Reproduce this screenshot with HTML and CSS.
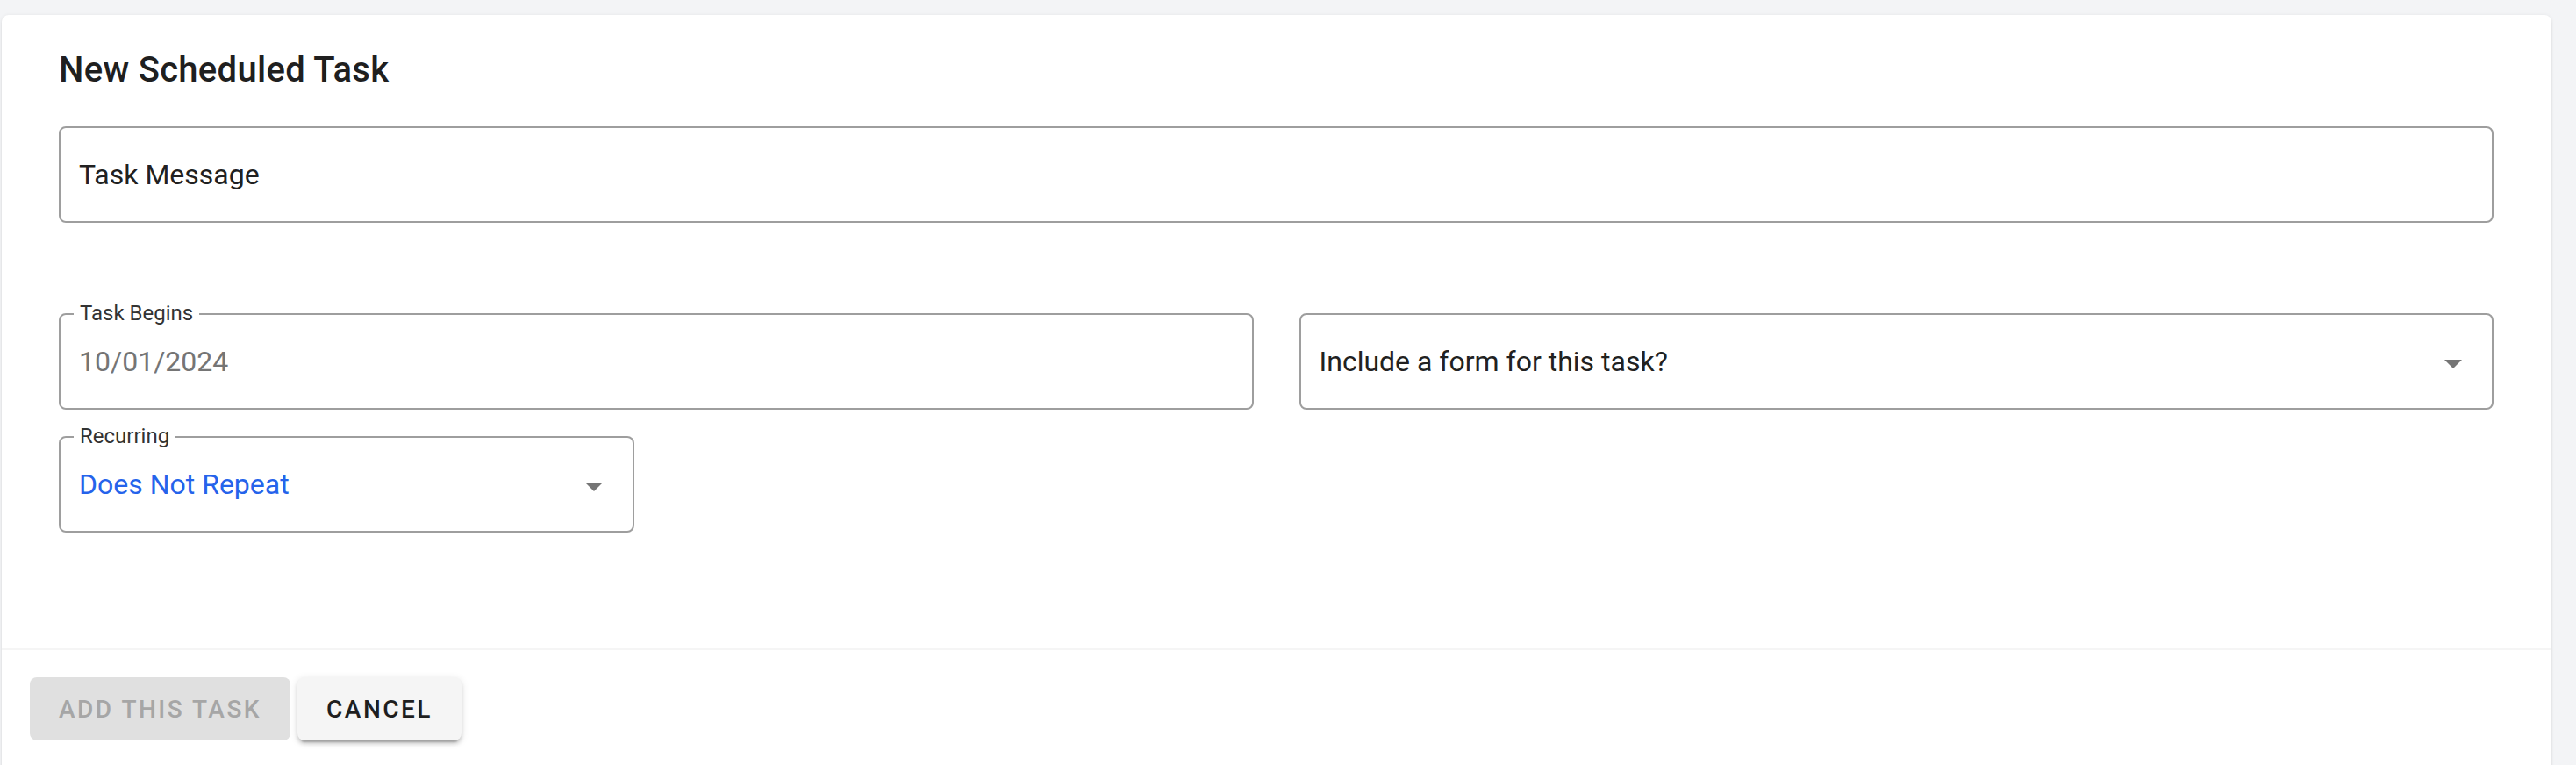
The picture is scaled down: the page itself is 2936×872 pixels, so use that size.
FILE: index.html
```html
<!DOCTYPE html>
<html lang="en">
<head>
<meta charset="utf-8">
<title>New Scheduled Task</title>
<link rel="stylesheet" href="styles.css">
</head>
<body>
<div class="page">
  <div class="card">
    <div class="card-body">
      <h2 class="title">New Scheduled Task</h2>
      <div class="field field-message">
        <span class="value">Task Message</span>
      </div>
      <div class="row">
        <div class="field">
          <span class="notch">Task Begins</span>
          <span class="value muted">10/01/2024</span>
        </div>
        <div class="field select">
          <span class="value">Include a form for this task?</span>
          <svg class="arrow" viewBox="0 0 20 10" width="20" height="10"><path d="M0 0 L10 10 L20 0 Z"/></svg>
        </div>
      </div>
      <div class="field select recurring">
        <span class="notch">Recurring</span>
        <span class="value blue">Does Not Repeat</span>
        <svg class="arrow" viewBox="0 0 20 10" width="20" height="10"><path d="M0 0 L10 10 L20 0 Z"/></svg>
      </div>
    </div>
    <div class="card-footer">
      <button class="btn btn-disabled" disabled>Add this task</button>
      <button class="btn btn-cancel">Cancel</button>
    </div>
  </div>
</div>
</body>
</html>
```
FILE: styles.css
```css
html, body {
  margin: 0;
  padding: 0;
  background: #f3f4f6;
  font-family: Roboto, "Noto Sans", "Liberation Sans", sans-serif;
}

.page {
  height: 872px;
  box-sizing: border-box;
  padding: 17px 28px 0 2px;
  overflow: hidden;
}

.card {
  background: #ffffff;
  border-radius: 8px 8px 0 0;
  min-height: 880px;
  box-shadow: 0 2px 3px rgba(0, 0, 0, 0.08), 0 0 4px rgba(0, 0, 0, 0.06);
}

.card-body {
  padding: 31px 66px 132px 65px;
}

.title {
  margin: 0;
  font-size: 40px;
  font-weight: 500;
  line-height: 64px;
  letter-spacing: 0.3px;
  color: #1f1f1f;
}

.field {
  position: relative;
  height: 110px;
  box-sizing: border-box;
  border: 2px solid #9e9e9e;
  border-radius: 8px;
  display: flex;
  align-items: center;
  padding: 0 24px 0 21px;
}

.field-message {
  margin-top: 32px;
}

.row {
  display: grid;
  grid-template-columns: 1fr 1fr;
  gap: 52px;
  margin-top: 103px;
}

.recurring {
  width: 656px;
  margin-top: 30px;
}

.select {
  padding-right: 34px;
}

.value {
  font-size: 32px;
  line-height: 46px;
  letter-spacing: 0;
  color: #212121;
  white-space: nowrap;
}

.value.muted {
  color: #757575;
}

.value.blue {
  color: #2563eb;
}

.notch {
  position: absolute;
  left: 15px;
  top: -16px;
  padding: 0 7px;
  background: #ffffff;
  font-size: 24px;
  line-height: 28px;
  letter-spacing: 0;
  color: #333333;
}

.arrow {
  margin-left: auto;
  margin-top: 6px;
  fill: #757575;
  flex: none;
}

.card-footer {
  border-top: 2px solid #f5f5f5;
  padding: 31px 32px 32px;
  display: flex;
  gap: 8px;
}

.btn {
  height: 72px;
  padding: 0 33px;
  border: none;
  border-radius: 8px;
  font-family: Roboto, "Noto Sans", "Liberation Sans", sans-serif;
  font-size: 28px;
  font-weight: 500;
  letter-spacing: 2.5px;
  text-transform: uppercase;
}

.btn-disabled {
  background: #e0e0e0;
  color: #a6a6a6;
}

.btn-cancel {
  background: #f5f5f5;
  color: #1f1f1f;
  box-shadow: 0 6px 2px -4px rgba(0, 0, 0, 0.2), 0 4px 4px rgba(0, 0, 0, 0.14), 0 2px 10px rgba(0, 0, 0, 0.12);
}
```
